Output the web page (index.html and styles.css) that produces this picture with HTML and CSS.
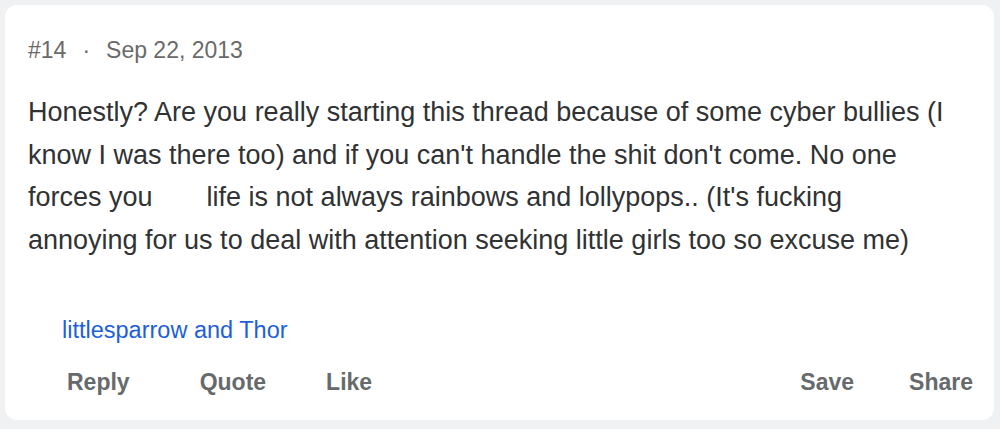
FILE: index.html
```html
<!DOCTYPE html>
<html>
<head>
<meta charset="utf-8">
<link rel="stylesheet" href="styles.css">
</head>
<body>
<article class="post">
  <header class="meta">
    <span>#14</span>
    <span class="dot">·</span>
    <span>Sep 22, 2013</span>
  </header>
  <div class="body">
    <p>Honestly? Are you really starting this thread because of some cyber bullies (I know I was there too) and if you can't handle the shit don't come. No one forces you&ensp;&emsp;&ensp;life is not always rainbows and lollypops.. (It's fucking annoying for us to deal with attention seeking little girls too so excuse me)</p>
  </div>
  <div class="reactions"><a href="#">littlesparrow and Thor</a></div>
  <footer class="actions">
    <div class="group">
      <a href="#" class="reply">Reply</a>
      <a href="#" class="quote">Quote</a>
      <a href="#" class="like">Like</a>
    </div>
    <div class="group">
      <a href="#" class="save">Save</a>
      <a href="#" class="share">Share</a>
    </div>
  </footer>
</article>
</body>
</html>
```
FILE: styles.css
```css
html, body {
  margin: 0;
  padding: 0;
}
body {
  background: #f0f1f3;
  font-family: "Liberation Sans", Arial, Helvetica, sans-serif;
  padding: 5px 6px 9px 5px;
  height: 429px;
  box-sizing: border-box;
}
.post {
  background: #fff;
  border-radius: 12px;
  height: 100%;
  box-sizing: border-box;
  padding: 33px 21px 0 23px;
  display: flex;
  flex-direction: column;
}
.meta {
  color: #6a6a6a;
  font-size: 23px;
  line-height: 24px;
  display: flex;
  gap: 16px;
}
.body {
  margin-top: 29px;
  color: #303234;
  font-size: 27px;
  line-height: 42.5px;
}
.body p {
  margin: 0;
  width: 925px;
}
.reactions {
  margin-top: 55px;
  padding-left: 34px;
  font-size: 23.5px;
  line-height: 28px;
}
.reactions a {
  color: #1d5fd8;
  text-decoration: none;
}
.actions {
  margin-top: 24px;
  display: flex;
  justify-content: space-between;
  padding-left: 39px;
}
.actions .group {
  display: flex;
}
.actions a {
  color: #666a6d;
  font-weight: bold;
  font-size: 23px;
  line-height: 28px;
  text-decoration: none;
}
.actions .reply { margin-right: 70px; }
.actions .quote { margin-right: 60px; }
.actions .share { margin-left: 55px; }
```
